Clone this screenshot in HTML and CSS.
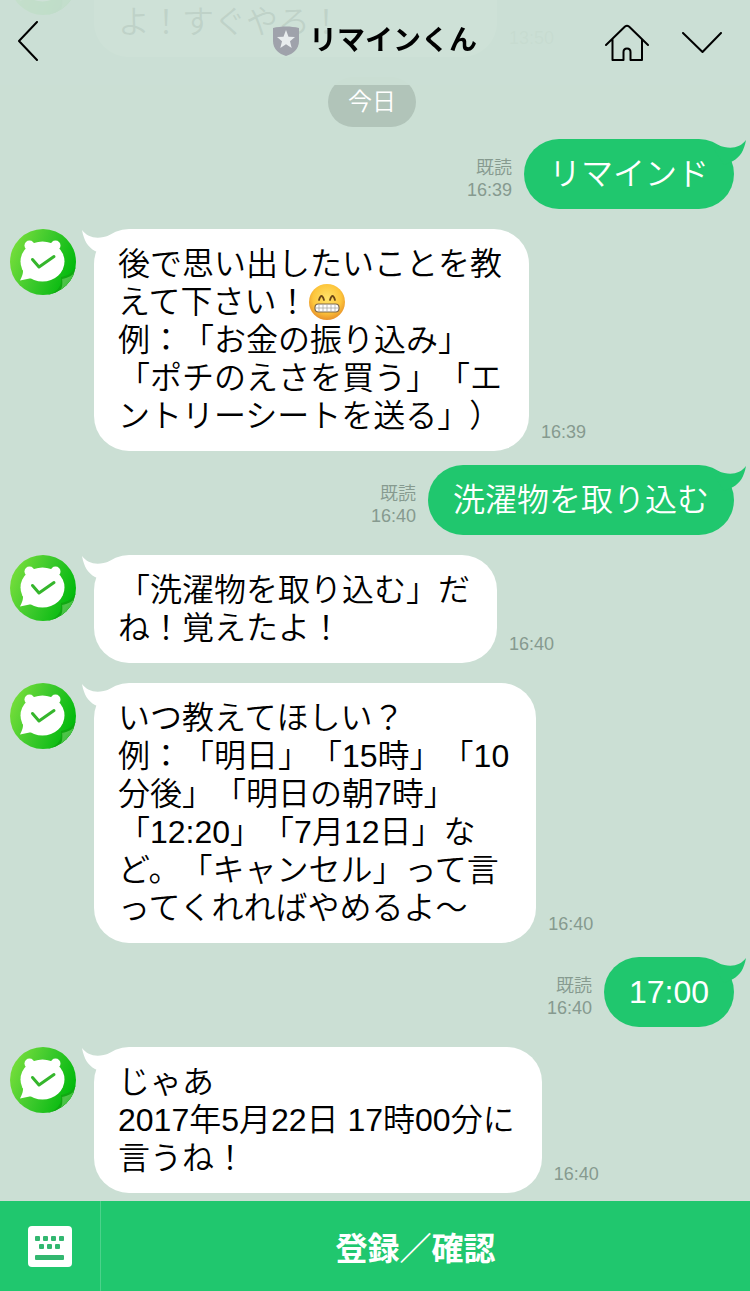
FILE: index.html
```html
<!DOCTYPE html>
<html lang="ja">
<head>
    <meta charset="UTF-8">
    <meta name="viewport" content="width=device-width, initial-scale=1.0">
    <title>リマインくん</title>
    <link rel="stylesheet" href="styles.css">
</head>
<body>

    <!-- shared shapes -->
    <svg class="defs" width="0" height="0" aria-hidden="true">
        <defs>
            <linearGradient id="avatar-green" x1="0" y1="0.2" x2="1" y2="0.6">
                <stop offset="0" stop-color="#7be03c"/>
                <stop offset="0.5" stop-color="#3cc92c"/>
                <stop offset="1" stop-color="#00b90c"/>
            </linearGradient>
            <linearGradient id="avatar-fold" x1="0" y1="0" x2="1" y2="1">
                <stop offset="0" stop-color="#1fa31d"/>
                <stop offset="0.4" stop-color="#4fc44a"/>
                <stop offset="1" stop-color="#27b526"/>
            </linearGradient>
            <radialGradient id="emoji-face" cx="0.5" cy="0.4" r="0.6">
                <stop offset="0" stop-color="#ffe36a"/>
                <stop offset="0.65" stop-color="#fdc63c"/>
                <stop offset="1" stop-color="#e8912a"/>
            </radialGradient>
            <clipPath id="avatar-clip"><circle cx="33" cy="33" r="33"/></clipPath>
        </defs>
        <symbol id="avatar" viewBox="0 0 66 66">
            <g clip-path="url(#avatar-clip)">
                <rect width="66" height="66" fill="url(#avatar-green)"/>
                <path d="M66 38C62 44 58 47 51 48C52 56 49 62 38 66H66Z" fill="#10a812"/>
                <path d="M66 42C62 47 58 49 52 50C53 56 52 61 47 66H66Z" fill="url(#avatar-fold)"/>
            </g>
            <circle cx="19.500" cy="16.500" r="5" fill="#fff"/>
            <circle cx="45.500" cy="16.500" r="5" fill="#fff"/>
            <ellipse cx="32.500" cy="32.500" rx="22" ry="20" fill="#fff"/>
            <path d="M12 37C14 42 13 46 10 51.500L22 49Z" fill="#fff"/>
            <path d="M22.500 30.500L29 38L44 27.500" fill="none" stroke="#35b62c" stroke-width="3" stroke-linecap="round" stroke-linejoin="round"/>
        </symbol>
        <symbol id="tail" viewBox="0 0 32 26">
            <path d="M0 1C6 9 16 11 28 6L32 10L22 26L13 22C6 18 2 12 0 1Z"/>
        </symbol>
    </svg>

    <header class="topbar">
        <a class="back" href="#" aria-label="戻る">
            <svg width="22" height="40" viewBox="0 0 22 40"><path d="M19 1L1 20L19 39"/></svg>
        </a>
        <h1 class="title">
            <svg width="26" height="30" viewBox="0 0 26 30" aria-hidden="true">
                <path d="M0 2C8 0 18 0 26 2V15C26 23 20 28 13 30C6 28 0 23 0 15Z" fill="#9fa2ab"/>
                <path d="M13 4L15.500 10.700L22 11L17 15.300L18.700 22L13 18.200L7.300 22L9 15.300L4 11L10.500 10.700Z" fill="#e8ecee"/>
            </svg>
            リマインくん
        </h1>
        <nav class="actions">
            <a href="#" aria-label="ホーム">
                <svg width="44" height="38" viewBox="0 0 44 38"><path d="M1 21L20 2.500Q22 1 24 2.500L43 21M7.500 15.500V36H18.500V28Q18.500 24.500 22 24.500T25.500 28V36H37V15.500"/></svg>
            </a>
            <button type="button" aria-label="メニュー">
                <svg width="40" height="22" viewBox="0 0 40 22"><path d="M1 1L20.500 20L39 1"/></svg>
            </button>
        </nav>
    </header>

    <main class="chat">
        <div class="message received">
            <svg class="avatar"><use href="#avatar"/></svg>
            <p class="bubble"><br>よ！すぐやろ！<span class="blank">　　　　</span></p>
            <div class="meta"><time>13:50</time></div>
        </div>

        <div class="date">今日</div>

        <div class="message sent">
            <div class="meta">既読<time>16:39</time></div>
            <p class="bubble">リマインド<svg class="tail"><use href="#tail"/></svg></p>
        </div>

        <div class="message received">
            <svg class="avatar"><use href="#avatar"/></svg>
            <p class="bubble"><svg class="tail"><use href="#tail"/></svg>後で思い出したいことを教<br>えて下さい！<svg class="emoji" viewBox="0 0 38 38" role="img" aria-label="にっこり">
                    <circle cx="19" cy="19" r="18" fill="url(#emoji-face)"/>
                    <path d="M11 17Q13.500 9 16 17M22 17Q24.500 9 27 17" fill="none" stroke="#6b4516" stroke-width="1.800" stroke-linecap="round"/>
                    <rect x="7" y="21" width="24" height="8" rx="3.500" fill="#fff" stroke="#7d674c" stroke-width="1.200"/>
                    <path d="M7 25H31M11 21V29M15 21V29M19 21V29M23 21V29M27 21V29" stroke="#aaa9a5" stroke-width="0.800"/>
                </svg><br>例：「お金の振り込み」<br>「ポチのえさを買う」「エ<br>ントリーシートを送る」）</p>
            <div class="meta"><time>16:39</time></div>
        </div>

        <div class="message sent">
            <div class="meta">既読<time>16:40</time></div>
            <p class="bubble">洗濯物を取り込む<svg class="tail"><use href="#tail"/></svg></p>
        </div>

        <div class="message received">
            <svg class="avatar"><use href="#avatar"/></svg>
            <p class="bubble"><svg class="tail"><use href="#tail"/></svg>「洗濯物を取り込む」だ<br>ね！覚えたよ！</p>
            <div class="meta"><time>16:40</time></div>
        </div>

        <div class="message received">
            <svg class="avatar"><use href="#avatar"/></svg>
            <p class="bubble"><svg class="tail"><use href="#tail"/></svg>いつ教えてほしい？<br>例：「明日」「15時」「10<br>分後」「明日の朝7時」<br>「12:20」「7月12日」な<br>ど。「キャンセル」って言<br>ってくれればやめるよ〜</p>
            <div class="meta"><time>16:40</time></div>
        </div>

        <div class="message sent">
            <div class="meta">既読<time>16:40</time></div>
            <p class="bubble">17:00<svg class="tail"><use href="#tail"/></svg></p>
        </div>

        <div class="message received">
            <svg class="avatar"><use href="#avatar"/></svg>
            <p class="bubble"><svg class="tail"><use href="#tail"/></svg>じゃあ<br>2017年5月22日 17時00分に<br>言うね！</p>
            <div class="meta"><time>16:40</time></div>
        </div>
    </main>

    <footer class="bottombar">
        <button type="button" class="keyboard" aria-label="キーボード">
            <svg width="44" height="41" viewBox="0 0 44 41">
                <rect width="44" height="41" rx="4" fill="#fff"/>
                <g fill="#32b770">
                    <rect x="7" y="10" width="5" height="5" rx="1"/>
                    <rect x="15" y="10" width="5" height="5" rx="1"/>
                    <rect x="23" y="10" width="5" height="5" rx="1"/>
                    <rect x="31" y="10" width="5" height="5" rx="1"/>
                    <rect x="11" y="18" width="5" height="5" rx="1"/>
                    <rect x="19" y="18" width="5" height="5" rx="1"/>
                    <rect x="27" y="18" width="5" height="5" rx="1"/>
                    <rect x="7" y="29" width="29" height="5" rx="1"/>
                </g>
            </svg>
        </button>
        <button type="button" class="register">登録／確認</button>
    </footer>

</body>
</html>
```
FILE: styles.css
```css
* {
    box-sizing: border-box;
}
body {
    margin: 0;
    height: 100vh;
    display: flex;
    flex-direction: column;
    background-color: #cbdfd4;
    color: #000;
    font-family: "Liberation Sans", "Noto Sans CJK JP", sans-serif;
    font-weight: 350;
    text-spacing-trim: space-all;
}
button {
    border: 0;
    padding: 0;
    background: none;
    color: inherit;
    font-family: inherit;
    cursor: pointer;
}
svg {
    display: block;
}
.defs {
    position: absolute;
}

/* header lies over the scrolled chat */
.topbar {
    position: fixed;
    top: 0;
    left: 0;
    right: 0;
    z-index: 1;
    height: 85px;
    padding: 0 18px 4px;
    display: grid;
    grid-template-columns: 1fr auto 1fr;
    align-items: center;
    background-color: rgba(203, 223, 212, 0.94);
}
.topbar path {
    stroke-linecap: round;
    stroke-linejoin: round;
}
.back svg,
.actions svg {
    fill: none;
    stroke: #000;
    stroke-width: 2;
}
.title {
    display: flex;
    align-items: center;
    gap: 10px;
    margin: 0;
    font-size: 28px;
    line-height: 38px;
    font-weight: bold;
}
.actions {
    display: flex;
    justify-content: flex-end;
    align-items: center;
    gap: 33px;
    padding: 4px 10px 0 0;
}

/* newest message sits at the bottom */
.chat {
    flex: 1;
    min-height: 0;
    overflow: hidden;
    display: flex;
    flex-direction: column;
    justify-content: flex-end;
    padding: 0 16px 8px 10px;
}
.message {
    flex: none;
    display: flex;
    align-items: flex-end;
}
.received {
    margin-top: 20px;
}
.sent {
    margin-top: 14px;
    justify-content: flex-end;
}
.date {
    flex: none;
    align-self: center;
    margin: 20px 0 -2px;
    padding: 0 20px;
    border-radius: 25px;
    background-color: #b1c4b9;
    color: #fff;
    font-size: 24px;
    line-height: 50px;
}
.avatar {
    align-self: flex-start;
    flex: none;
    width: 66px;
    height: 66px;
    margin-right: 18px;
}
.bubble {
    position: relative;
    margin: 0;
    padding: 16px 27px 16px 24px;
    border-radius: 35px;
    font-size: 32px;
    line-height: 38px;
    white-space: nowrap;
}
.received .bubble {
    background-color: #fff;
}
.sent .bubble {
    background-color: #20c76e;
    color: #fff;
    padding: 16px 25px;
}
.tail {
    position: absolute;
    top: 0;
    left: -12px;
    width: 32px;
    height: 26px;
    fill: #fff;
}
.sent .tail {
    left: auto;
    right: -12px;
    fill: #20c76e;
    transform: scaleX(-1);
}
.emoji {
    display: inline-block;
    width: 38px;
    height: 38px;
    vertical-align: top;
}
.meta {
    margin: 0 12px 8px;
    color: #869a8f;
    font-size: 18px;
    line-height: 22px;
    text-align: right;
}
.meta time {
    display: block;
}

.bottombar {
    flex: none;
    display: flex;
    height: 90px;
    background-color: #20c76e;
    color: #fff;
}
.keyboard {
    width: 101px;
    display: flex;
    align-items: center;
    justify-content: center;
    border-right: 1px solid #4cd28b;
}
.register {
    flex: 1;
    padding-right: 20px;
    font-size: 32px;
    font-weight: bold;
}
```
